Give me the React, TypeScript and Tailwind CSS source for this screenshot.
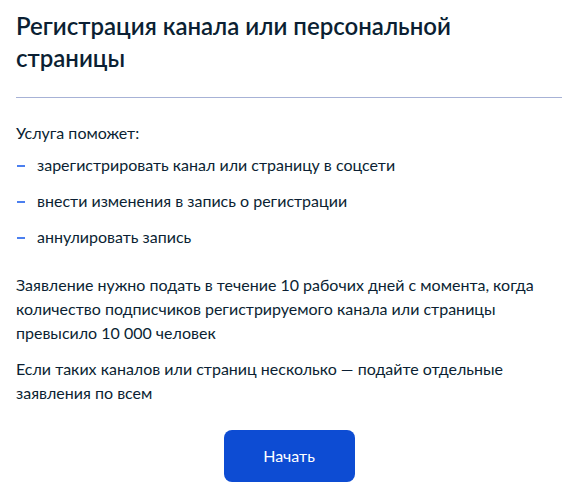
import React from 'react';

const items = [
  'зарегистрировать канал или страницу в соцсети',
  'внести изменения в запись о регистрации',
  'аннулировать запись',
];

export default function App() {
  return (
    <div className="bg-white min-h-[500px] pl-4 pr-[19px] pt-[10px] text-[#0b1f33] font-['Lato','Noto_Sans',sans-serif]">
      <h1 className="text-[24px] leading-8 font-semibold">
        Регистрация канала или персональной страницы
      </h1>
      <div className="mt-[23px] h-px bg-[#a7b2d6]" />

      <p className="mt-[23px] text-base leading-6">Услуга поможет:</p>
      <ul className="mt-2 flex flex-col gap-3">
        {items.map((item) => (
          <li key={item} className="flex items-center text-base leading-6">
            <span className="ml-px mr-3 w-2 h-[2px] shrink-0 bg-[#4b7fef] translate-y-[1px]" />
            <span>{item}</span>
          </li>
        ))}
      </ul>

      <p className="mt-6 text-base leading-6">
        Заявление нужно подать в течение 10 рабочих дней с момента, когда количество подписчиков
        регистрируемого канала или страницы превысило 10 000 человек
      </p>
      <p className="mt-3 text-base leading-6">
        Если таких каналов или страниц несколько — подайте отдельные заявления по всем
      </p>

      <div className="mt-[25px] flex justify-center">
        <button className="w-[131px] h-[52px] rounded-lg bg-[#0d4cd3] text-white text-base">
          Начать
        </button>
      </div>
    </div>
  );
}
